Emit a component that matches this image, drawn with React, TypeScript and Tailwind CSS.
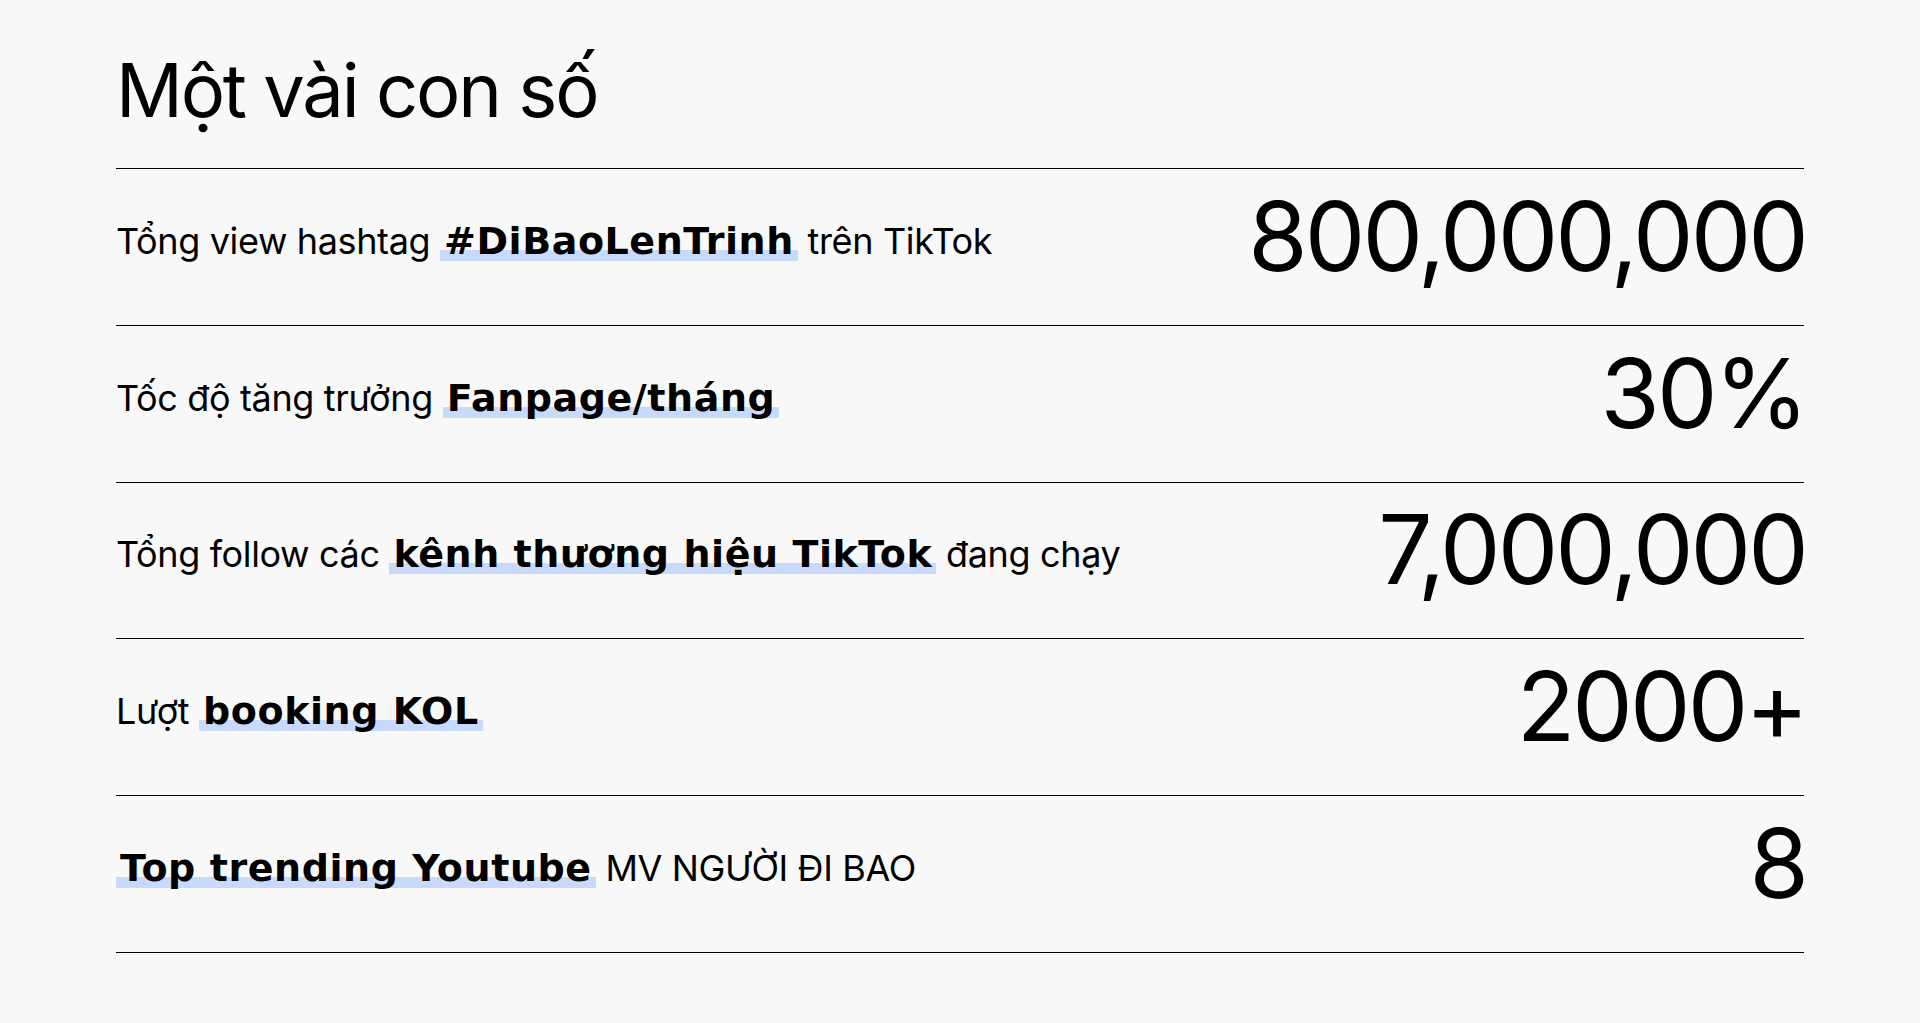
const stats = [
  {
    before: 'Tổng view hashtag ',
    strong: '#DiBaoLenTrinh',
    after: ' trên TikTok',
    value: '800,000,000',
  },
  { before: 'Tốc độ tăng trưởng ', strong: 'Fanpage/tháng', after: '', value: '30%' },
  {
    before: 'Tổng follow các ',
    strong: 'kênh thương hiệu TikTok',
    after: ' đang chạy',
    value: '7,000,000',
  },
  { before: 'Lượt ', strong: 'booking KOL', after: '', value: '2000+' },
  { before: '', strong: 'Top trending Youtube', after: ' MV NGƯỜI ĐI BAO', value: '8' },
]

function Mark({ children }: { children: string }) {
  return (
    <span className="inline-block text-[38px] leading-none px-1 pb-[1px] font-['DejaVu_Sans',sans-serif] font-bold tracking-[0.015em] bg-[linear-gradient(to_bottom,transparent_28px,#c8dafb_28px)]">
      {children}
    </span>
  )
}

export default function App() {
  return (
    <div className="min-h-screen bg-[#f8f8f8] text-black font-['Inter','Noto_Sans',sans-serif]">
      <div className="px-[116px] pt-[53px]">
        <h1 className="text-[74px] leading-none font-normal tracking-[-0.03em] mb-[41px]">Một vài con số</h1>

        <div className="border-b border-black">
          {stats.map((s) => (
            <div key={s.value} className="h-[156.75px] border-t border-black flex items-center justify-between">
              <p className="text-[36px] leading-none pb-[11px] whitespace-pre tracking-[-0.01em]">
                {s.before}
                <Mark>{s.strong}</Mark>
                {s.after}
              </p>
              <span className="text-[96px] leading-none pb-[22px] tracking-[-0.03em] -mr-[2px]">{s.value}</span>
            </div>
          ))}
        </div>
      </div>
    </div>
  )
}
